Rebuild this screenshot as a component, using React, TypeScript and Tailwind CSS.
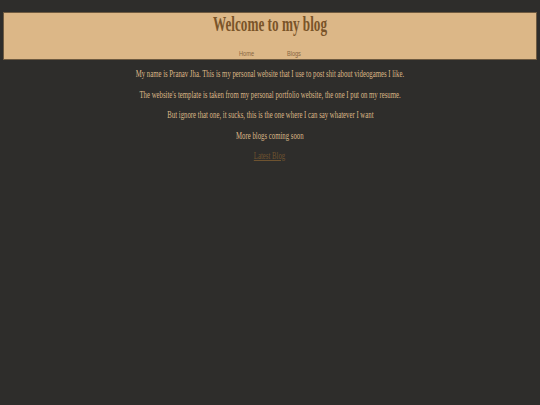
export default function App() {
  const lines = [
    "My name is Pranav Jha. This is my personal website that I use to post shit about videogames I like.",
    "The website's template is taken from my personal portfolio website, the one I put on my resume.",
    "But ignore that one, it sucks, this is the one where I can say whatever I want",
    "More blogs coming soon",
  ]

  return (
    <div className="min-h-[405px] bg-[#2e2d2b] pt-3 font-['Liberation_Serif',serif]">
      <header className="mx-[3px] h-[48px] border border-[#6e5a40] bg-[#dcb787]">
        <h1 className="scale-x-[0.66] text-center text-[20px] leading-[22px] font-bold text-[#7a5429]">
          Welcome to my blog
        </h1>
        <nav className="mt-[14px] flex scale-x-[0.7] justify-center gap-[47px] font-['Liberation_Sans',sans-serif] text-[8px] leading-[9px] text-[#86663f]">
          <a>Home</a>
          <a>Blogs</a>
        </nav>
      </header>
      <main className="mt-[7px] flex flex-col items-center text-[#dcb787]">
        {lines.map((line) => (
          <p key={line} className="mb-[7.5px] scale-x-[0.616] text-center text-[11px] leading-[13px] whitespace-nowrap">
            {line}
          </p>
        ))}
        <a className="scale-x-[0.616] text-[11px] leading-[13px] text-[#6e5330] underline">Latest Blog</a>
      </main>
    </div>
  )
}
